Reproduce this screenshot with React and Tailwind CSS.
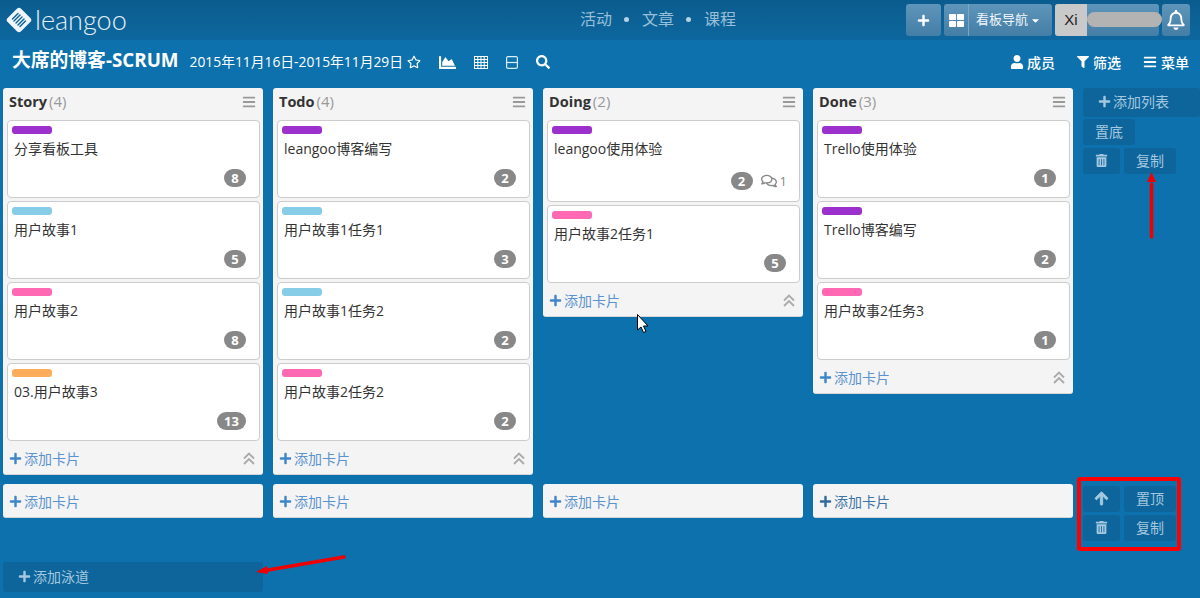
import { FaPlus, FaRegStar, FaChartArea, FaSearch, FaUser, FaFilter, FaBars, FaTrashAlt, FaArrowUp, FaRegComments, FaRegBell, FaThLarge, FaCaretDown } from 'react-icons/fa'

const PURPLE = 'bg-[#9b30cc]'
const BLUE = 'bg-[#87cde8]'
const PINK = 'bg-[#ff69b4]'
const ORANGE = 'bg-[#fdad5c]'

const lists = [
  {
    name: 'Story', count: 4, cards: [
      { label: PURPLE, title: '分享看板工具', points: 8 },
      { label: BLUE, title: '用户故事1', points: 5 },
      { label: PINK, title: '用户故事2', points: 8 },
      { label: ORANGE, title: '03.用户故事3', points: 13 },
    ],
  },
  {
    name: 'Todo', count: 4, cards: [
      { label: PURPLE, title: 'leangoo博客编写', points: 2 },
      { label: BLUE, title: '用户故事1任务1', points: 3 },
      { label: BLUE, title: '用户故事1任务2', points: 2 },
      { label: PINK, title: '用户故事2任务2', points: 2 },
    ],
  },
  {
    name: 'Doing', count: 2, cards: [
      { label: PURPLE, title: 'leangoo使用体验', points: 2, comments: 1 },
      { label: PINK, title: '用户故事2任务1', points: 5 },
    ],
  },
  {
    name: 'Done', count: 3, cards: [
      { label: PURPLE, title: 'Trello使用体验', points: 1 },
      { label: PURPLE, title: 'Trello博客编写', points: 2 },
      { label: PINK, title: '用户故事2任务3', points: 1 },
    ],
  },
]

function Logo() {
  return (
    <svg width="28" height="28" viewBox="0 0 28 28" className="shrink-0">
      <rect x="4.5" y="4.5" width="19" height="19" rx="3" transform="rotate(45 14 14)" fill="#f0f6fa" />
      <g stroke="#0c6399" strokeWidth="1.4" strokeLinecap="round">
        <path d="M7.5 13 L13 7.5" />
        <path d="M9 15 L15 9" />
        <path d="M11 17 L17 11" />
        <path d="M13 19 L19 13" />
        <path d="M15 20.5 L20.5 15" />
      </g>
    </svg>
  )
}

function GridIcon() {
  return (
    <svg width="14" height="13" viewBox="0 0 14 13" className="ml-[18px]" fill="none" stroke="#fff">
      <rect x="0.5" y="0.5" width="13" height="12" />
      <path d="M0 3.5 H14 M0 6.5 H14 M0 9.5 H14 M3.8 0 V13 M7 0 V13 M10.2 0 V13" />
    </svg>
  )
}

function SplitIcon() {
  return (
    <svg width="12" height="13" viewBox="0 0 12 13" className="ml-[18px]" fill="none" stroke="#d9f0fb">
      <rect x="0.6" y="0.6" width="10.8" height="11.8" rx="1.5" strokeWidth="1.2" />
      <path d="M0 6.5 H12" strokeWidth="1.2" />
    </svg>
  )
}

function DoubleUp() {
  return (
    <svg width="12" height="13" viewBox="0 0 12 13" fill="none" stroke="#aaa" strokeWidth="1.8">
      <path d="M1 6.5 L6 1.5 L11 6.5" />
      <path d="M1 12 L6 7 L11 12" />
    </svg>
  )
}

function HeaderButton({ className, children }) {
  return (
    <div className={`h-8 flex items-center rounded-[3px] bg-gradient-to-b from-[#5f95ba] to-[#437ea6] text-white overflow-hidden ${className}`}>
      {children}
    </div>
  )
}

function Header() {
  return (
    <header className="h-10 flex items-center bg-gradient-to-b from-[#0b5c8e] to-[#0d679e]">
      <div className="w-[580px] pl-[5px] flex items-center gap-[2px]">
        <Logo />
        <span className="text-[27px] leading-none font-light text-[#e4eff6] font-['Lato'] pb-0.5">leangoo</span>
      </div>
      <nav className="w-[326px] flex items-center text-base text-[#97bfd8] pb-[2px]">
        <span>活动</span>
        <span className="ml-3 mr-[13px] w-[5px] h-[5px] rounded-full bg-[#b6d3e5]" />
        <span>文章</span>
        <span className="ml-3 mr-[13px] w-[5px] h-[5px] rounded-full bg-[#b6d3e5]" />
        <span>课程</span>
      </nav>
      <div className="flex items-center gap-[3px]">
        <HeaderButton className="w-[35px] justify-center">
          <FaPlus size={13} />
        </HeaderButton>
        <HeaderButton className="w-[108px]">
          <div className="w-[25px] h-full flex items-center justify-center border-r border-[#7ba6c4]">
            <FaThLarge size={15} />
          </div>
          <span className="ml-[7px] text-[13px] text-[#f1f6fa]">看板导航</span>
          <FaCaretDown size={11} className="ml-[2px]" />
        </HeaderButton>
        <HeaderButton className="w-[104px]">
          <div className="w-8 h-full flex items-center justify-center bg-[#c9c9c9] text-[#222] text-[15px] font-['Liberation_Sans']">Xi</div>
        </HeaderButton>
        <HeaderButton className="w-[28px] justify-center">
          <FaRegBell size={20} />
        </HeaderButton>
      </div>
    </header>
  )
}

function SubHeader() {
  return (
    <div className="h-12 flex items-center pl-3 pr-[11px] pb-1 text-white">
      <h1 className="text-[18.8px] font-bold leading-none pb-1 whitespace-nowrap">大席的博客-SCRUM</h1>
      <span className="ml-[11px] text-[13.8px] whitespace-nowrap">2015年11月16日-2015年11月29日</span>
      <FaRegStar size={14} className="ml-[4px]" />
      <FaChartArea size={17} className="ml-[18px]" />
      <GridIcon />
      <SplitIcon />
      <FaSearch size={14} className="ml-[18px]" />
      <div className="ml-auto flex items-center text-[14px] font-medium">
        <FaUser size={14} />
        <span className="ml-[3px]">成员</span>
        <FaFilter size={12} className="ml-[22px]" />
        <span className="ml-[4px]">筛选</span>
        <FaBars size={14} className="ml-[22px]" />
        <span className="ml-[4px]">菜单</span>
      </div>
    </div>
  )
}

function Card({ card }) {
  return (
    <div className={`bg-white border border-[#ccc] rounded-[4px] mb-[3px] pl-1 pr-[13px] pt-[5px] flex flex-col ${card.comments ? 'h-[82px]' : 'h-[78px]'}`}>
      <div className={`w-10 h-2 rounded-[3px] ${card.label}`} />
      <div className="mt-[5px] ml-[2px] text-[14px] leading-5 text-[#333]">{card.title}</div>
      <div className="mt-auto mb-[10px] flex items-center justify-end">
        <span className={`h-[18px] rounded-full bg-[#888] text-white text-[13px] font-bold leading-[18px] text-center ${card.points > 9 ? 'w-[29px]' : 'w-[22px]'}`}>
          {card.points}
        </span>
        {card.comments && (
          <span className="ml-2 -mr-[1px] flex items-center text-[13px] text-[#888]">
            <FaRegComments size={16} />
            <span className="ml-[3px]">{card.comments}</span>
          </span>
        )}
      </div>
    </div>
  )
}

function AddCard({ dark }) {
  return (
    <div className={`flex items-center text-[14px] ${dark ? 'text-[#3d74a8]' : 'text-[#5a93cf]'}`}>
      <FaPlus size={13} className={`ml-[6px] ${dark ? 'text-[#336a9e]' : 'text-[#3f86c8]'}`} />
      <span className="ml-[2px]">添加卡片</span>
    </div>
  )
}

function List({ list }) {
  return (
    <section className="w-[260px] shrink-0 bg-[#f4f4f4] rounded-[3px] border-b border-[#d5d5d5]">
      <div className="h-8 flex items-center justify-between pl-[6px] pr-[7px] pb-1">
        <div className="text-[15px] leading-none">
          <span className="font-bold text-[14.5px] text-[#333]">{list.name}</span>
          <span className="ml-[2px] text-[#999]">({list.count})</span>
        </div>
        <FaBars size={14} className="text-[#999]" />
      </div>
      <div className="pl-1 pr-[3px]">
        {list.cards.map((card) => (
          <Card key={card.title} card={card} />
        ))}
      </div>
      <div className="h-[30px] flex items-center justify-between pr-2 pb-[2px]">
        <AddCard />
        <DoubleUp />
      </div>
    </section>
  )
}

function DarkButton({ className, children }) {
  return (
    <div className={`flex items-center justify-center rounded-[3px] bg-[#0e659b] text-[#a4c8df] text-[14px] pb-[2px] ${className}`}>
      {children}
    </div>
  )
}

function Overlay() {
  return (
    <svg width="1200" height="598" viewBox="0 0 1200 598" className="absolute left-0 top-0 pointer-events-none">
      <rect x="1079" y="479" width="100" height="70" fill="none" stroke="#ff0000" strokeWidth="4" rx="1" />
      <path d="M1151.5 237 L1151.5 184" stroke="#f00000" strokeWidth="3.5" strokeLinecap="round" />
      <path d="M1151.5 172 L1147 182 L1156 182 Z" fill="#f00000" />
      <path d="M344 557 L268 570" stroke="#f00000" strokeWidth="3.5" strokeLinecap="round" />
      <path d="M256 572 L267 566 L268 574 Z" fill="#f00000" />
      <path d="M637.5 314.5 L637.5 330 L641 327 L643.5 332.5 L646 331.5 L643.5 326 L648 326 Z" fill="#ffffff" stroke="#000000" strokeWidth="1" />
    </svg>
  )
}

export default function App() {
  return (
    <div className="relative w-[1200px] h-[598px] overflow-hidden bg-[#0c71ad] font-['Open_Sans','Noto_Sans_CJK_SC',sans-serif]">
      <Header />
      <SubHeader />
      <main className="px-[3px]">
        <div className="flex items-start gap-[10px]">
          {lists.map((list) => (
            <List key={list.name} list={list} />
          ))}
          <div className="flex-1 flex flex-col items-start -mr-[3px]">
            <DarkButton className="w-full h-[29px] !justify-start pl-[15px]">
              <FaPlus size={13} className="mr-[2px]" />
              添加列表
            </DarkButton>
            <DarkButton className="w-[52px] h-[26px] mt-[2px]">置底</DarkButton>
            <div className="flex mt-[3px] gap-1">
              <DarkButton className="w-[37px] h-[26px]"><FaTrashAlt size={13} /></DarkButton>
              <DarkButton className="w-[52px] h-[26px]">复制</DarkButton>
            </div>
          </div>
        </div>
        <div className="flex items-start gap-[10px] mt-[9px]">
          {lists.map((list) => (
            <div key={list.name} className="w-[260px] h-[34px] flex items-center bg-[#f4f4f4] rounded-[3px] border-b border-[#d5d5d5] pt-[2px]">
              <AddCard dark={list.name === 'Done'} />
            </div>
          ))}
          <div className="flex flex-col gap-[3px] mt-[2px]">
            <div className="flex gap-1">
              <DarkButton className="w-[37px] h-[26px]"><FaArrowUp size={15} stroke="currentColor" strokeWidth={30} /></DarkButton>
              <DarkButton className="w-[52px] h-[26px]">置顶</DarkButton>
            </div>
            <div className="flex gap-1">
              <DarkButton className="w-[37px] h-[26px]"><FaTrashAlt size={13} /></DarkButton>
              <DarkButton className="w-[52px] h-[26px]">复制</DarkButton>
            </div>
          </div>
        </div>
        <DarkButton className="w-[260px] h-[30px] mt-[21px] !justify-start pl-[15px]">
          <FaPlus size={13} className="mr-[2px]" />
          添加泳道
        </DarkButton>
      </main>
      {/* blurred-out user name */}
      <div className="absolute left-[1087px] top-[12px] w-[75px] h-[15px] rounded-full bg-[#b3b3b3]" />
      <Overlay />
    </div>
  )
}
